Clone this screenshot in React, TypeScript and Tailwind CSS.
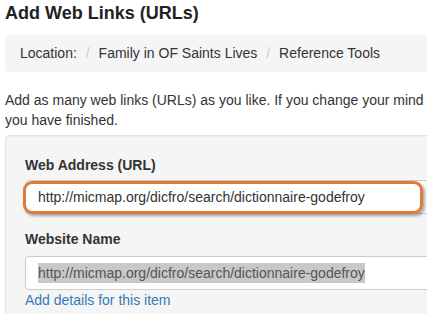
import React from "react";

const crumbs = ["Location:", "Family in OF Saints Lives", "Reference Tools"];
const url = "http://micmap.org/dicfro/search/dictionnaire-godefroy";

const App: React.FC = () => {
    return (
        <div className="w-[427px] h-[314px] overflow-hidden bg-white text-[#333] text-[14px] leading-[20px] font-['Liberation_Sans',Arial,sans-serif]">
            <div className="w-[640px]">
                <h1 className="mt-[3px] ml-[5px] text-[18px] leading-[20px] font-bold text-[#222]">Add Web Links (URLs)</h1>

                <div className="mt-[12px] ml-[5px] h-[37px] py-[8px] pl-[15px] bg-[#f5f5f5] rounded-[4px] flex whitespace-nowrap">
                    {crumbs.map((c, i) => (
                        <span key={c} className="flex">
                            {i > 0 && <span className="ml-[4px] px-[5px] text-[#ccc]">/{"\u00a0"}</span>}
                            <span>{c}</span>
                        </span>
                    ))}
                </div>

                <p className="mt-[18px] ml-[5px] whitespace-nowrap">
                    Add as many web links (URLs) as you like. If you change your mind
                    <br />
                    you have finished.
                </p>

                <div className="mt-[5px] ml-[5px] h-[200px] border border-[#e3e3e3] bg-[#f5f5f5] rounded-[4px] pl-[19px] pt-[19px] shadow-[inset_0_1px_1px_rgba(0,0,0,0.05)]">
                    <div className="font-bold">Web Address (URL)</div>
                    <div className="relative mt-[5px] w-[560px]">
                        <div className="h-[34px] px-[12px] flex items-center bg-white border border-[#ccc] rounded-[4px] text-[#333]">
                            {url}
                        </div>
                        {/* highlight annotation */}
                        <div className="absolute left-[-2px] top-[1px] w-[400px] h-[33px] border-[3px] border-[#dc7b3b] rounded-[9px] shadow-[2px_2px_3px_rgba(0,0,0,0.35)]" />
                    </div>

                    <div className="mt-[15px] font-bold">Website Name</div>
                    <div className="mt-[7px] w-[560px] h-[34px] px-[12px] flex items-center bg-white border border-[#ccc] rounded-[4px] text-[#555]">
                        <span className="bg-[#c8c8c8]">{url}</span>
                    </div>
                    <a className="block text-[#337ab7]">Add details for this item</a>
                </div>
            </div>
        </div>
    );
};

export default App;
